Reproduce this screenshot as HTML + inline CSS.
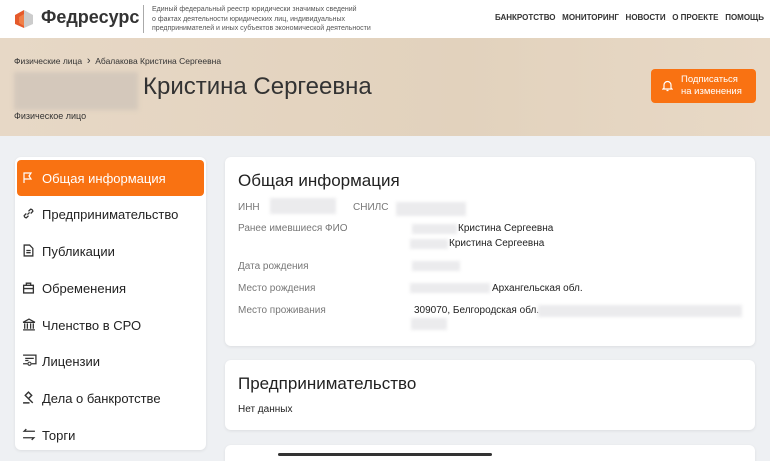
<!DOCTYPE html>
<html><head><meta charset="utf-8"><style>
*{margin:0;padding:0;box-sizing:border-box}
html,body{width:770px;height:461px;overflow:hidden}
body{background:#eef0f3;font-family:"Liberation Sans",sans-serif;color:#222;position:relative}
.abs{position:absolute;white-space:nowrap}
.hdr{left:0;top:0;width:770px;height:38px;background:#fff}
.ban{left:0;top:38px;width:770px;height:98px;background:linear-gradient(90deg,#e7d8c6,#e2d2bd 60%,#e8d9c6)}
.blur{background:#d4c8bb;filter:blur(2px)}
.gb{background:#ebebed;filter:blur(1.5px)}
.card{background:#fff;border-radius:6px;box-shadow:0 1px 3px rgba(0,0,0,.08)}
.nav div{position:absolute;left:42px;font-size:13px;color:#222}
.nav svg{position:absolute;left:22px}
.lbl{font-size:10px;color:#777}
.val{font-size:10px;color:#222}
</style></head><body>
<div class="abs hdr"></div>
<svg class="abs" style="left:13px;top:9px" width="22" height="20" viewBox="0 0 22 20"><polygon points="11,1 20,6 20,15 11,19" fill="#ccc"/><polygon points="11,1 2,6 2,15 11,19" fill="#e55a2b"/><polygon points="11,5 6,8 6,14 11,17" fill="#f08048"/></svg>
<div class="abs" style="left:41px;top:7px;font-size:18px;font-weight:bold;color:#333">Федресурс</div>
<div class="abs" style="left:143px;top:5px;width:1px;height:28px;background:#aaa"></div>
<div class="abs" style="left:152px;top:5px;font-size:7px;line-height:9.5px;color:#555">Единый федеральный реестр юридически значимых сведений<br>о фактах деятельности юридических лиц, индивидуальных<br>предпринимателей и иных субъектов экономической деятельности</div>
<div class="abs" style="left:495px;top:13px;font-size:8px;font-weight:bold;color:#333">БАНКРОТСТВО&nbsp;&nbsp;&nbsp;МОНИТОРИНГ&nbsp;&nbsp;&nbsp;НОВОСТИ&nbsp;&nbsp;&nbsp;О ПРОЕКТЕ&nbsp;&nbsp;&nbsp;ПОМОЩЬ</div>
<div class="abs ban"></div>
<div class="abs" style="left:14px;top:55px;font-size:8.5px;color:#333">Физические лица &nbsp;<span style="font-size:11px">›</span>&nbsp; Абалакова Кристина Сергеевна</div>
<div class="abs blur" style="left:14px;top:72px;width:124px;height:38px"></div>
<div class="abs" style="left:143px;top:73px;font-size:24px;color:#333">Кристина Сергеевна</div>
<div class="abs" style="left:14px;top:111px;font-size:9px;color:#333">Физическое лицо</div>
<div class="abs" style="left:651px;top:69px;width:105px;height:34px;background:#f97212;border-radius:4px;color:#fff;font-size:9.5px;line-height:12px;padding:5px 0 0 30px">Подписаться<br>на изменения</div>
<svg class="abs" style="left:662px;top:80px" width="11" height="12" viewBox="0 0 11 12"><path d="M2 8V5a3.5 3.5 0 0 1 7 0v3l1 1H1z M4.5 10.5h2" stroke="#fff" stroke-width="1.2" fill="none"/></svg>

<div class="abs card" style="left:15px;top:157px;width:191px;height:293px"></div>
<div class="abs" style="left:17px;top:160px;width:187px;height:36px;background:#f97212;border-radius:4px"></div>
<div class="nav">
<svg style="top:172px" width="12" height="12" viewBox="0 0 12 12"><path d="M2 11V1h7l-2 3 2 3H2" stroke="#fff" stroke-width="1.2" fill="none"/></svg>
<div style="top:171px;color:#fff">Общая информация</div>
<svg style="top:207px" width="13" height="13" viewBox="0 0 12 12"><path d="M5 7l2-2M4 6L2 8a2 2 0 0 0 2 2l2-2M8 6l2-2a2 2 0 0 0-2-2L6 4" stroke="#333" stroke-width="1.2" fill="none"/></svg>
<div style="top:207px">Предпринимательство</div>
<svg style="top:244px" width="13" height="13" viewBox="0 0 12 12"><path d="M2 1h5l3 3v7H2z M4 6h4M4 8h4" stroke="#333" stroke-width="1.2" fill="none"/></svg>
<div style="top:244px">Публикации</div>
<svg style="top:281px" width="13" height="13" viewBox="0 0 12 12"><path d="M1.5 4h9v7h-9z M4 4V2h4v2 M1.5 7h9" stroke="#333" stroke-width="1.2" fill="none"/></svg>
<div style="top:281px">Обременения</div>
<svg style="top:318px" width="14" height="13" viewBox="0 0 13 12"><path d="M1 4L6.5 1 12 4z M2.5 5v5M5 5v5M8 5v5M10.5 5v5M1 11h11" stroke="#333" stroke-width="1.2" fill="none"/></svg>
<div style="top:318px">Членство в СРО</div>
<svg style="top:354px" width="15" height="13" viewBox="0 0 14 12"><path d="M1 1h12v8H9M5 9H1z M3 4h8M3 6h3" stroke="#333" stroke-width="1.2" fill="none"/><circle cx="7" cy="9" r="1.5" stroke="#333" fill="none"/></svg>
<div style="top:354px">Лицензии</div>
<svg style="top:391px" width="14" height="13" viewBox="0 0 13 12"><path d="M3 4l3-3 3 3-3 3z M6 7l4 4 M1 11h6" stroke="#333" stroke-width="1.3" fill="none"/></svg>
<div style="top:391px">Дела о банкротстве</div>
<svg style="top:428px" width="14" height="13" viewBox="0 0 13 12"><path d="M12 3H2l2-2M1 9h10l-2 2" stroke="#333" stroke-width="1.2" fill="none"/></svg>
<div style="top:428px">Торги</div>
</div>

<div class="abs card" style="left:225px;top:157px;width:530px;height:189px"></div>
<div class="abs" style="left:238px;top:171px;font-size:17px;color:#222">Общая информация</div>
<div class="abs lbl" style="left:238px;top:202px">ИНН</div>
<div class="abs gb" style="left:270px;top:198px;width:66px;height:16px"></div>
<div class="abs lbl" style="left:353px;top:202px">СНИЛС</div>
<div class="abs gb" style="left:396px;top:202px;width:70px;height:14px"></div>
<div class="abs lbl" style="left:238px;top:223px">Ранее имевшиеся ФИО</div>
<div class="abs gb" style="left:412px;top:224px;width:45px;height:10px"></div>
<div class="abs val" style="left:458px;top:223px">Кристина Сергеевна</div>
<div class="abs gb" style="left:410px;top:239px;width:38px;height:10px"></div>
<div class="abs val" style="left:449px;top:238px">Кристина Сергеевна</div>
<div class="abs lbl" style="left:238px;top:261px">Дата рождения</div>
<div class="abs gb" style="left:412px;top:261px;width:48px;height:10px"></div>
<div class="abs lbl" style="left:238px;top:283px">Место рождения</div>
<div class="abs gb" style="left:410px;top:283px;width:80px;height:10px"></div>
<div class="abs val" style="left:492px;top:283px">Архангельская обл.</div>
<div class="abs lbl" style="left:238px;top:305px">Место проживания</div>
<div class="abs val" style="left:414px;top:305px">309070, Белгородская обл.</div>
<div class="abs gb" style="left:538px;top:305px;width:204px;height:12px"></div>
<div class="abs gb" style="left:411px;top:318px;width:36px;height:12px"></div>

<div class="abs card" style="left:225px;top:360px;width:530px;height:70px"></div>
<div class="abs" style="left:238px;top:374px;font-size:17px;color:#222">Предпринимательство</div>
<div class="abs val" style="left:238px;top:404px">Нет данных</div>
<div class="abs card" style="left:225px;top:445px;width:530px;height:30px"></div>
<div class="abs" style="left:278px;top:453px;width:214px;height:3px;background:#333;border-radius:2px"></div>
</body></html>
